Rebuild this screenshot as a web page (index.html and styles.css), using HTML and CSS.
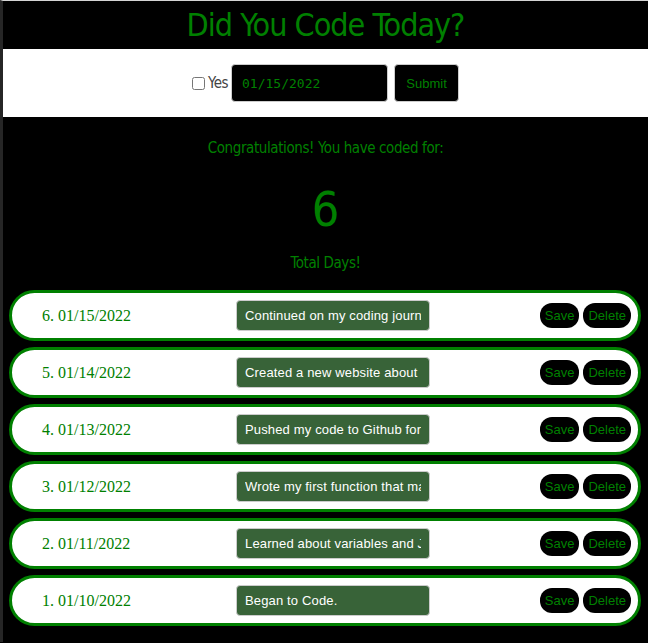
FILE: index.html
```html
<!DOCTYPE html>
<html>
<head>
<meta charset="utf-8">
<link rel="stylesheet" href="styles.css">
</head>
<body>
<div class="frame">
  <header class="top">
    <h1 class="title">Did You Code Today?</h1>
  </header>
  <form class="entry">
    <label class="yes"><input type="checkbox" class="check">Yes</label>
    <input type="text" class="date" value="01/15/2022">
    <button type="button" class="submit">Submit</button>
  </form>
  <section class="stats">
    <p class="congrats">Congratulations! You have coded for:</p>
    <p class="count">6</p>
    <p class="total">Total Days!</p>
  </section>
  <ul class="list">
    <li class="row"><span class="day">6. 01/15/2022</span><input class="note" type="text" value="Continued on my coding journey"><span class="actions"><button class="btn">Save</button><button class="btn">Delete</button></span></li>
    <li class="row"><span class="day">5. 01/14/2022</span><input class="note" type="text" value="Created a new website about coding"><span class="actions"><button class="btn">Save</button><button class="btn">Delete</button></span></li>
    <li class="row"><span class="day">4. 01/13/2022</span><input class="note" type="text" value="Pushed my code to Github for the first time"><span class="actions"><button class="btn">Save</button><button class="btn">Delete</button></span></li>
    <li class="row"><span class="day">3. 01/12/2022</span><input class="note" type="text" value="Wrote my first function that may work"><span class="actions"><button class="btn">Save</button><button class="btn">Delete</button></span></li>
    <li class="row"><span class="day">2. 01/11/2022</span><input class="note" type="text" value="Learned about variables and JavaScript"><span class="actions"><button class="btn">Save</button><button class="btn">Delete</button></span></li>
    <li class="row"><span class="day">1. 01/10/2022</span><input class="note" type="text" value="Began to Code."><span class="actions"><button class="btn">Save</button><button class="btn">Delete</button></span></li>
  </ul>
</div>
</body>
</html>
```

FILE: styles.css
```css
html, body {
  margin: 0;
  padding: 0;
  background: #000;
  height: 100%;
}
.frame {
  border-left: 3px solid #262626;
  border-top: 1px solid #d4d4d4;
  min-height: 642px;
  box-sizing: border-box;
  background: #000;
  font-family: "DejaVu Sans Condensed", "Liberation Sans", sans-serif;
}
.top {
  height: 48px;
  display: flex;
  align-items: center;
  justify-content: center;
}
.title {
  margin: 0;
  color: #008000;
  font-weight: normal;
  font-size: 32px;
  letter-spacing: -1px;
  line-height: 48px;
}
.entry {
  background: #fff;
  height: 68px;
  margin: 0;
  display: flex;
  align-items: center;
  justify-content: center;
  gap: 3px;
}
.yes {
  display: flex;
  align-items: center;
  color: #444;
  font-size: 15px;
  letter-spacing: -0.5px;
}
.check {
  margin: 0 3px 0 0;
  width: 13px;
  height: 13px;
}
.date {
  width: 157px;
  height: 38px;
  box-sizing: border-box;
  background: #000;
  color: #008000;
  border: 1px solid #ccc;
  border-radius: 4px;
  padding: 0 10px;
  font-family: "DejaVu Sans Mono", monospace;
  font-size: 13px;
}
.submit {
  width: 65px;
  height: 38px;
  box-sizing: border-box;
  margin-left: 3px;
  background: #000;
  color: #008000;
  border: 1px solid #ccc;
  border-radius: 4px;
  font-family: "Liberation Sans", Arial, sans-serif;
  font-size: 13px;
}
.stats {
  text-align: center;
  color: #008000;
  padding-top: 21px;
}
.stats p {
  margin: 0;
}
.congrats {
  font-size: 15px;
  letter-spacing: -0.4px;
  line-height: 20px;
}
.count {
  font-size: 48px;
  line-height: 58px;
  margin-top: 22px !important;
}
.total {
  font-size: 15px;
  letter-spacing: -0.4px;
  line-height: 20px;
  margin-top: 15px !important;
}
.list {
  list-style: none;
  margin: 17px 0 0 0;
  padding: 0 7px 0 6px;
  display: flex;
  flex-direction: column;
  gap: 6px;
}
.row {
  height: 51px;
  box-sizing: border-box;
  border: 3px solid #008000;
  border-radius: 26px;
  background: #fff;
  display: flex;
  align-items: center;
  padding: 0 7px 0 30px;
}
.day {
  width: 194px;
  font-family: "Liberation Serif", "Times New Roman", serif;
  font-size: 16px;
  color: #008000;
}
.note {
  width: 194px;
  height: 31px;
  box-sizing: border-box;
  background: #386338;
  color: #fff;
  border: 1px solid #ccc;
  border-radius: 4px;
  padding: 0 8px;
  font-family: "Liberation Sans", Arial, sans-serif;
  font-size: 13px;
  letter-spacing: 0.15px;
}
.actions {
  margin-left: auto;
  display: flex;
  gap: 4px;
}
.btn {
  height: 25px;
  background: #000;
  color: #008000;
  border: 0;
  border-radius: 12px;
  padding: 0 5px;
  font-family: "Liberation Sans", Arial, sans-serif;
  font-size: 13px;
}
```
